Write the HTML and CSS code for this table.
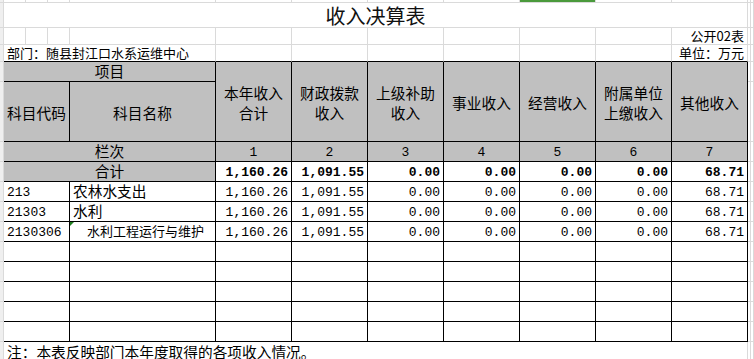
FILE: index.html
```html
<!DOCTYPE html>
<html lang="zh-CN">
<head>
<meta charset="utf-8">
<title>收入决算表</title>
<link rel="stylesheet" href="styles.css">
</head>
<body>
<div class="sheet">
  <!-- row A -->
  <div class="g st"></div><div class="g"></div><div class="g"></div><div class="g"></div><div class="g"></div><div class="g"></div><div class="g"></div><div class="g"></div><div class="g"></div><div class="g sel"></div><div class="g"></div><div class="g"></div><div class="g"></div><div class="g"></div>
  <!-- row B -->
  <div class="g st"></div><div class="g span11 title">收入决算表</div><div class="g"></div><div class="g"></div>
  <!-- row C -->
  <div class="g st"></div><div class="g"></div><div class="g"></div><div class="g"></div><div class="g"></div><div class="g"></div><div class="g"></div><div class="g"></div><div class="g"></div><div class="g"></div><div class="g"></div><div class="g small right">公开02表</div><div class="g"></div><div class="g"></div>
  <!-- row D -->
  <div class="g st"></div><div class="g span4 bt small left">部门：随县封江口水系运维中心</div><div class="g bt"></div><div class="g bt"></div><div class="g bt"></div><div class="g bt"></div><div class="g bt"></div><div class="g bt"></div><div class="g bt small right">单位：万元</div><div class="g"></div><div class="g"></div>
  <!-- row E -->
  <div class="g st"></div><div class="g k hd span4 ctr">项目</div>
  <div class="g k hd rs2 hcell">本年收入<br>合计</div>
  <div class="g k hd rs2 hcell">财政拨款<br>收入</div>
  <div class="g k hd rs2 hcell">上级补助<br>收入</div>
  <div class="g k hd rs2 hcell">事业收入</div>
  <div class="g k hd rs2 hcell">经营收入</div>
  <div class="g k hd rs2 hcell">附属单位<br>上缴收入</div>
  <div class="g k hd rs2 hcell">其他收入</div>
  <div class="g"></div><div class="g"></div>
  <!-- row F -->
  <div class="g st"></div><div class="g k hd span3 hcell">科目代码</div><div class="g k hd hcell">科目名称</div><div class="g"></div><div class="g"></div>
  <!-- row G -->
  <div class="g st"></div><div class="g k hd span4 ctr">栏次</div>
  <div class="g k hd nc">1</div><div class="g k hd nc">2</div><div class="g k hd nc">3</div><div class="g k hd nc">4</div><div class="g k hd nc">5</div><div class="g k hd nc">6</div><div class="g k hd nc">7</div>
  <div class="g"></div><div class="g"></div>
  <!-- row H -->
  <div class="g st"></div><div class="g k hd span4 ctr">合计</div>
  <div class="g k num b">1,160.26</div><div class="g k num b">1,091.55</div><div class="g k num b">0.00</div><div class="g k num b">0.00</div><div class="g k num b">0.00</div><div class="g k num b">0.00</div><div class="g k num b">68.71</div>
  <div class="g"></div><div class="g"></div>
  <!-- row I -->
  <div class="g st"></div><div class="g k span3 code">213</div><div class="g k name">农林水支出</div>
  <div class="g k num">1,160.26</div><div class="g k num">1,091.55</div><div class="g k num">0.00</div><div class="g k num">0.00</div><div class="g k num">0.00</div><div class="g k num">0.00</div><div class="g k num">68.71</div>
  <div class="g"></div><div class="g"></div>
  <!-- row J -->
  <div class="g st"></div><div class="g k span3 code">21303</div><div class="g k name">水利</div>
  <div class="g k num">1,160.26</div><div class="g k num">1,091.55</div><div class="g k num">0.00</div><div class="g k num">0.00</div><div class="g k num">0.00</div><div class="g k num">0.00</div><div class="g k num">68.71</div>
  <div class="g"></div><div class="g"></div>
  <!-- row K -->
  <div class="g st"></div><div class="g k span3 code">2130306</div><div class="g k name sub tri">水利工程运行与维护</div>
  <div class="g k num">1,160.26</div><div class="g k num">1,091.55</div><div class="g k num">0.00</div><div class="g k num">0.00</div><div class="g k num">0.00</div><div class="g k num">0.00</div><div class="g k num">68.71</div>
  <div class="g"></div><div class="g"></div>
  <!-- empty rows -->
  <div class="g st"></div><div class="g k span3"></div><div class="g k"></div><div class="g k"></div><div class="g k"></div><div class="g k"></div><div class="g k"></div><div class="g k"></div><div class="g k"></div><div class="g k"></div><div class="g"></div><div class="g"></div>
  <div class="g st"></div><div class="g k span3"></div><div class="g k"></div><div class="g k"></div><div class="g k"></div><div class="g k"></div><div class="g k"></div><div class="g k"></div><div class="g k"></div><div class="g k"></div><div class="g"></div><div class="g"></div>
  <div class="g st"></div><div class="g k span3"></div><div class="g k"></div><div class="g k"></div><div class="g k"></div><div class="g k"></div><div class="g k"></div><div class="g k"></div><div class="g k"></div><div class="g k"></div><div class="g"></div><div class="g"></div>
  <div class="g st"></div><div class="g k span3"></div><div class="g k"></div><div class="g k"></div><div class="g k"></div><div class="g k"></div><div class="g k"></div><div class="g k"></div><div class="g k"></div><div class="g k"></div><div class="g"></div><div class="g"></div>
  <div class="g st"></div><div class="g k span3"></div><div class="g k"></div><div class="g k"></div><div class="g k"></div><div class="g k"></div><div class="g k"></div><div class="g k"></div><div class="g k"></div><div class="g k"></div><div class="g"></div><div class="g"></div>
  <!-- note row -->
  <div class="g st"></div><div class="g span11 note">注：本表反映部门本年度取得的各项收入情况。</div><div class="g"></div><div class="g"></div>
</div>
</body>
</html>
```
FILE: styles.css
```css
html, body {
  margin: 0;
  padding: 0;
  background: #ffffff;
}
body {
  width: 754px;
  height: 359px;
  overflow: hidden;
  font-family: "Noto Sans CJK SC", "Noto Sans", sans-serif;
  color: #000000;
}
.sheet {
  display: grid;
  grid-template-columns: 4px 22px 22px 22px 146px repeat(7, 76px) 3px 3px;
  grid-template-rows: 3px 25px 17px 17px 20px 60px repeat(11, 20px);
}
.g {
  box-sizing: border-box;
  border-right: 1px solid #dadada;
  border-bottom: 1px solid #dadada;
  min-width: 0;
  white-space: nowrap;
  font-size: 14.7px;
  line-height: 18px;
}
.st {
  background: #efefef;
}
.sel {
  background: #4a9a3c;
}
.span3 { grid-column: span 3; }
.span4 { grid-column: span 4; }
.span11 { grid-column: span 11; }
.rs2 { grid-row: span 2; }

.title {
  font-size: 20px;
  line-height: 24px;
  padding-top: 1px;
  text-align: center;
  color: #111111;
}
.small {
  font-size: 13px;
  line-height: 16px;
}
.right {
  text-align: right;
  padding-right: 3px;
}
.left {
  padding-left: 3px;
}
.bt {
  border-bottom-color: #000000;
}
.k {
  border-right-color: #000000;
  border-bottom-color: #000000;
}
.hd {
  background: #c0c0c0;
}
.ctr {
  text-align: center;
}
.hcell {
  display: flex;
  align-items: center;
  justify-content: center;
  text-align: center;
  line-height: 20px;
  padding-top: 3px;
}
.nc {
  font-family: "Liberation Mono", monospace;
  font-size: 13px;
  line-height: 17px;
  padding-top: 2px;
  text-align: center;
}
.num {
  font-family: "Liberation Mono", monospace;
  font-size: 13px;
  line-height: 17px;
  padding-top: 2px;
  padding-right: 3px;
  text-align: right;
}
.b {
  font-weight: bold;
}
.code {
  font-family: "Liberation Mono", monospace;
  font-size: 13px;
  line-height: 17px;
  padding-top: 2px;
  padding-left: 3px;
}
.name {
  padding-left: 3px;
}
.sub {
  font-size: 13px;
  padding-left: 17px;
}
.tri {
  position: relative;
}
.tri::before {
  content: "";
  position: absolute;
  left: 0;
  top: 0;
  border-top: 4px solid #1f7f1f;
  border-right: 4px solid transparent;
}
.note {
  padding-left: 3px;
  padding-top: 1px;
  border-bottom-color: transparent;
}
```
